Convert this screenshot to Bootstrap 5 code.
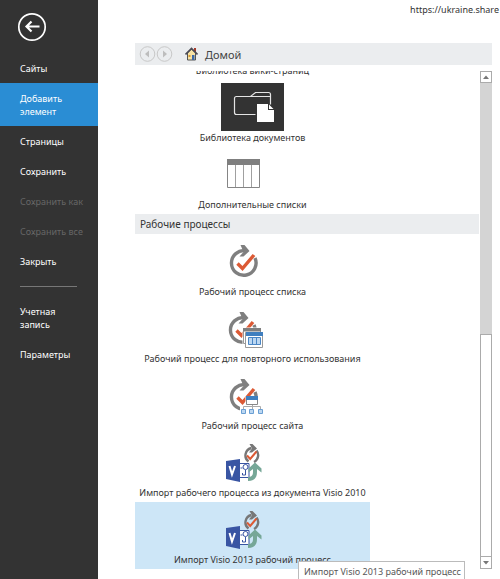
<!DOCTYPE html>
<html lang="ru">
<head>
<meta charset="utf-8">
<meta name="viewport" content="width=device-width, initial-scale=1">
<title>Добавить элемент</title>
<link href="https://cdn.jsdelivr.net/npm/bootstrap@5.3.0/dist/css/bootstrap.min.css" rel="stylesheet">
<style>
body { font: 9px/13px "Noto Sans", "Open Sans", sans-serif; color: #333; background: #fff; }
.side { width: 98px; background: #333; }
.side .back { margin: 12px 0 11px 17px; width: 30px; height: 30px; }
.side .nav-link { color: #fff; padding: 9px 8px 8px 20px; font-size: 9px; line-height: 13px; }
.side .nav-link.disabled { color: #666; }
.side .nav-link.active { background: #2a8dd4; }
.side hr { margin: 10px 21px 9px 20px; border-color: #bbb; opacity: .5; }
.pane { padding: 0 8px 10px 37px; }
.url { height: 43px; padding-top: 3px; margin-right: -7px; }
.crumbs { height: 22px; background: #ebedef; font-size: 11px; }
.crumbs .step { width: 17px; height: 18px; }
.home { margin: 0 8px 0 12px; color: #444; gap: 7px; }
.view { margin-top: 6px; }
.items { margin-right: 1px; }
.tile { width: 235px; height: 67px; padding: 3px 0 2px; color: #333; font-size: 9px; line-height: 14px; }
.tile svg { width: 63px; height: 48px; }
.tile.picked { background: #cde6f7; }
.section { height: 20px; padding-left: 5px; background: #ebedef; font-size: 10px; line-height: 20px; margin: 0; color: #333; }
.scroller { width: 12px; }
.scroller button { height: 12px; border: 1px solid #ababab; background: #fff; }
.track { background: #d4d4d4; }
.thumb { height: 47%; border: 1px solid #ababab; background: #fff; }
.tip { left: 200px; bottom: 0; height: 18px; padding: 2px 3px 0 5px; border: 1px solid #bbb; border-bottom: 0; background: #fff; color: #575757; line-height: 15px; }
</style>
</head>
<body>
<svg class="d-none">
  <defs>
    <g id="cycle">
      <path d="M25 13.9A12.3 12.3 0 1 0 34 21" fill="none" stroke="#7f7f7f" stroke-width="3.4"/>
      <path d="M19.5 8h4l5 6-6 5.500h-4l4-4.500z" fill="#7f7f7f"/>
      <path d="M16.500 26.500l5 5L33 18" fill="none" stroke="#dc5a35" stroke-width="3.4"/>
    </g>
    <g id="visio">
      <path d="M27.500 23.500A7.600 7.600 0 0 1 30.500 10M35.500 12.500A7.600 7.600 0 0 1 33 24" fill="none" stroke="#777" stroke-width="2.400"/>
      <path d="M28.500 6h3l4.500 4.500-5 4h-3l3-4z" fill="#777"/>
      <path d="M26 17.500l3.200 3.500 6.300-7.500" fill="none" stroke="#dc5a35" stroke-width="2"/>
      <path d="M18 25.500h10v14H18z" fill="#fff" stroke="#3955a3"/>
      <circle cx="24.500" cy="29" r="2.500" fill="#fff" stroke="#3955a3"/>
      <path d="M24.500 32v5h-3v-2m-2-5h2" fill="none" stroke="#3955a3"/>
      <path d="M5 23l14-2v23L5 41z" fill="#3955a3"/>
      <path d="M8.500 28l2.500 8.500L14 28" fill="none" stroke="#fff" stroke-width="2"/>
      <path d="M34 24.500l6.500 6v4L36 31v3c0 6-3 9-9 9v-4c3 0 5-1 5-5v-3l-4.500 3.500v-4z" fill="#76a797"/>
    </g>
  </defs>
</svg>

<div class="d-flex min-vh-100">
  <aside class="side flex-shrink-0">
    <button class="back btn p-0 border-0 d-block" type="button" aria-label="Назад">
      <svg class="d-block" width="30" height="30" fill="none" stroke="#fff"><circle cx="15" cy="15" r="13.200" stroke-width="1.700"/><path d="M22.500 14.500H10M14.500 9.500l-5 5 5 5" stroke-width="2.200"/></svg>
    </button>
    <nav class="nav flex-column">
      <a class="nav-link" href="#">Сайты</a>
      <a class="nav-link active" href="#" aria-current="page">Добавить<br>элемент</a>
      <a class="nav-link" href="#">Страницы</a>
      <a class="nav-link" href="#">Сохранить</a>
      <a class="nav-link disabled text-nowrap" href="#" aria-disabled="true">Сохранить как</a>
      <a class="nav-link disabled text-nowrap" href="#" aria-disabled="true">Сохранить все</a>
      <a class="nav-link" href="#">Закрыть</a>
      <hr>
      <a class="nav-link" href="#">Учетная<br>запись</a>
      <a class="nav-link" href="#">Параметры</a>
    </nav>
  </aside>

  <main class="pane d-flex flex-column flex-grow-1 position-relative vh-100">
    <div class="url text-end flex-shrink-0">https://ukraine.share</div>
    <div class="crumbs d-flex align-items-center flex-shrink-0 ps-1">
      <button class="step btn p-0 border-0 d-flex" type="button" aria-label="Назад"><svg width="17" height="18"><circle cx="8.500" cy="9" r="7.300" fill="none" stroke="#c8c8c8"/><path d="M10 5.500v7L6 9z" fill="#bdbdbd"/></svg></button>
      <button class="step btn p-0 border-0 d-flex" type="button" aria-label="Вперед"><svg width="17" height="18"><circle cx="8.500" cy="9" r="7.300" fill="none" stroke="#c8c8c8"/><path d="M7 5.500v7L11 9z" fill="#bdbdbd"/></svg></button>
      <a class="home d-flex align-items-center text-decoration-none" href="#">
        <svg width="13" height="14"><path d="M2.500 6v7h8V6l-4-4z" fill="#f7e2a4" stroke="#555"/><path d="M9 1h2v4H9z" fill="#a53b2a"/><path d="M.5 7.500l6-6 6 6" fill="none" stroke="#4b4b55" stroke-width="1.600"/><path d="M7 8h2.500v5H7z" fill="#3c68a8"/><path d="M3.500 8h2v2h-2z" fill="#d99a2e"/></svg>
        Домой</a>
    </div>

    <div class="view d-flex flex-grow-1 overflow-hidden">
      <div class="items d-flex flex-column justify-content-end flex-grow-1 overflow-hidden">
        <button class="tile btn border-0 rounded-0 d-flex flex-column align-items-center flex-shrink-0 text-nowrap" type="button"><svg class="flex-shrink-0"></svg>Библиотека вики-страниц</button>
        <button class="tile btn border-0 rounded-0 d-flex flex-column align-items-center flex-shrink-0 text-nowrap" type="button">
          <svg class="flex-shrink-0"><path d="M0 0h63v48H0z" fill="#333"/><path d="M34.500 31.500h-19q-2 0-2-2v-14q0-2 2-2h14l5-4h13q2 0 2 2v10M30 13.500h19" fill="none" stroke="#e4e4e4" stroke-width="1.200"/><path d="M36 21h11v6h6v12H36z" fill="#fff"/><path d="M48 21.500v4.500h4.500z" fill="#fff"/></svg>Библиотека документов</button>
        <button class="tile btn border-0 rounded-0 d-flex flex-column align-items-center flex-shrink-0 text-nowrap" type="button">
          <svg class="flex-shrink-0"><path d="M6.500 10.500h32v27h-32z" fill="#fff" stroke="#858585"/><path d="M6 9h33v6H6z" fill="#7f7f7f"/><path d="M14.500 15v22m8-22v22m8-22v22" stroke="#a0a0a0"/></svg>Дополнительные списки</button>
        <h2 class="section flex-shrink-0 fw-normal">Рабочие процессы</h2>
        <button class="tile btn border-0 rounded-0 d-flex flex-column align-items-center flex-shrink-0 text-nowrap" type="button">
          <svg class="flex-shrink-0"><use href="#cycle"/></svg>Рабочий процесс списка</button>
        <button class="tile btn border-0 rounded-0 d-flex flex-column align-items-center flex-shrink-0 text-nowrap" type="button">
          <svg class="flex-shrink-0"><use href="#cycle" x="-1"/><path d="M21.500 23.500h19v21h-19z" fill="#fff"/><path d="M22.500 25.500h17v14h-17z" fill="#fff" stroke="#999"/><path d="M22 24h18v3.500H22z" fill="#7f7f7f"/><path d="M24.500 28.500h17v15h-17z" fill="#fff" stroke="#999"/><path d="M25 28h17v4H25z" fill="#3f7fbf"/><path d="M27.500 33.500h12v7h-12zm4 0v7m4-7v7" fill="#bcd7f1" stroke="#4a86c5"/></svg>Рабочий процесс для повторного использования</button>
        <button class="tile btn border-0 rounded-0 d-flex flex-column align-items-center flex-shrink-0 text-nowrap" type="button">
          <svg class="flex-shrink-0"><use href="#cycle"/><path d="M24.500 25.500h13v8h4v10H19v-8h5.500z" fill="#fff"/><path d="M31.500 34v4M22.500 38v-2.500h17V38" fill="none" stroke="#aaa"/><path d="M25.500 26.500h11v7h-11z" fill="#fff" stroke="#888"/><path d="M25 25h12v4H25z" fill="#3f7fbf"/><path d="M20.500 38.500h4v4h-4zm8 0h4v4h-4zm9 0h4v4h-4z" fill="#bcd7f1" stroke="#6a9fd3"/></svg>Рабочий процесс сайта</button>
        <button class="tile btn border-0 rounded-0 d-flex flex-column align-items-center flex-shrink-0 text-nowrap" type="button">
          <svg class="flex-shrink-0"><use href="#visio"/></svg>Импорт рабочего процесса из документа Visio 2010</button>
        <button class="tile picked btn border-0 rounded-0 d-flex flex-column align-items-center flex-shrink-0 text-nowrap" type="button" aria-describedby="tip">
          <svg class="flex-shrink-0"><use href="#visio"/></svg>Импорт Visio 2013 рабочий процесс</button>
      </div>
      <div class="scroller d-flex flex-column flex-shrink-0">
        <button class="p-0 d-flex" type="button" aria-label="Вверх"><svg width="10" height="10"><path d="M2 7h6L5 3.500z" fill="#777"/></svg></button>
        <div class="track d-flex flex-column justify-content-end flex-grow-1"><div class="thumb"></div></div>
        <button class="p-0 d-flex border-top-0" type="button" aria-label="Вниз"><svg width="10" height="10"><path d="M2 4h6L5 7.500z" fill="#777"/></svg></button>
      </div>
    </div>
    <div class="tip position-absolute text-nowrap" id="tip" role="tooltip">Импорт Visio 2013 рабочий процесс</div>
  </main>
</div>
<script src="https://cdn.jsdelivr.net/npm/bootstrap@5.3.0/dist/js/bootstrap.bundle.min.js"></script>
</body>
</html>
